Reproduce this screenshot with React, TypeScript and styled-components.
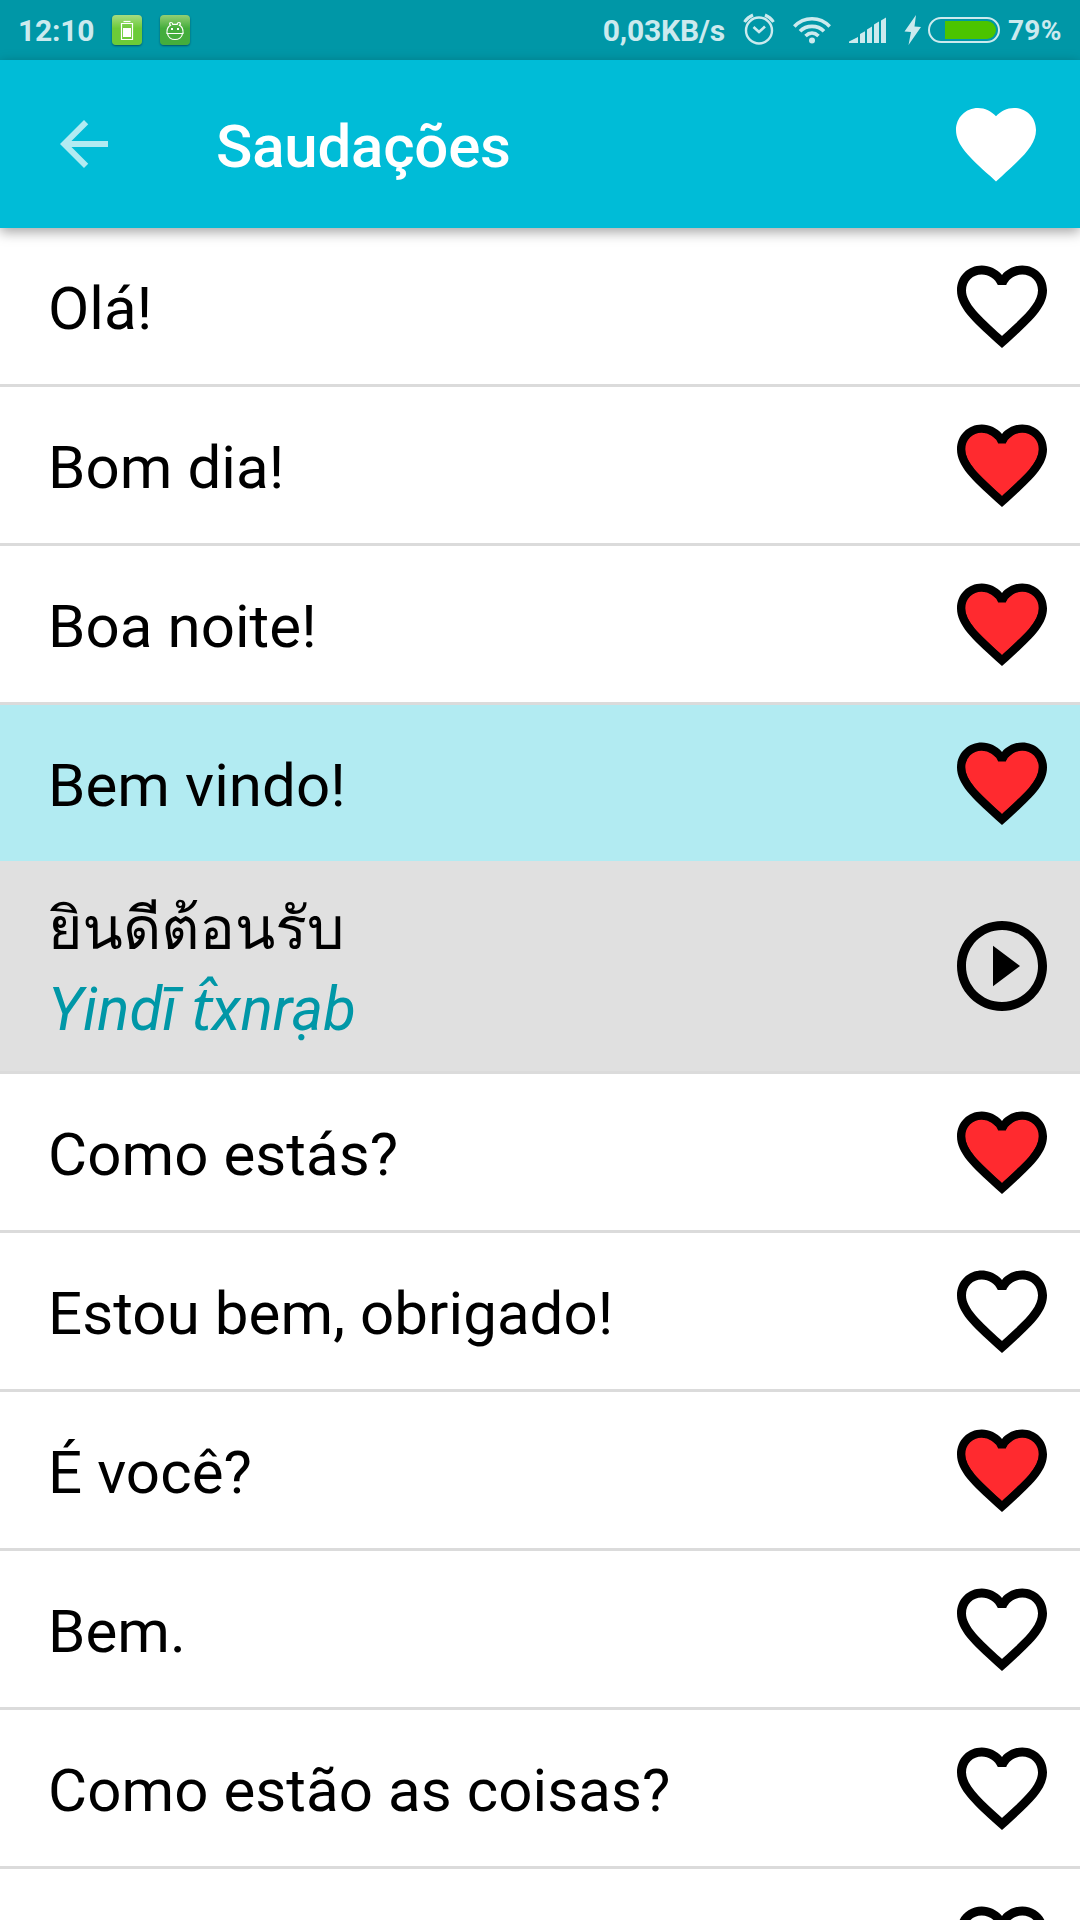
import React from "react";
import styled, { createGlobalStyle } from "styled-components";

const Global = createGlobalStyle`
  * { box-sizing: border-box; }
  html, body { margin: 0; padding: 0; background: #fff; }
  body { overflow: hidden; }
  svg { display: block; flex: none; }
`;

const Screen = styled.div`
  width: 1080px;
  height: 1920px;
  display: flex;
  flex-direction: column;
  overflow: hidden;
  background: #fff;
  font-family: Roboto, "Noto Sans", sans-serif;
  color: #000;
`;

const StatusBar = styled.div`
  flex: none;
  height: 60px;
  display: flex;
  align-items: center;
  padding: 0 18px;
  background: #0097a7;
  color: #cceaee;
`;

const StatusText = styled.span<{ $size?: number; $spacing?: number; $width?: number }>`
  display: block;
  flex: none;
  width: ${(p) => (p.$width ? `${p.$width}px` : "auto")};
  font-size: ${(p) => p.$size ?? 30}px;
  letter-spacing: ${(p) => p.$spacing ?? -0.2}px;
  line-height: 59px;
  font-weight: 700;
  white-space: nowrap;
  padding-top: 1px;
`;

const AppBadge = styled.span<{ $from: string; $to: string }>`
  display: flex;
  align-items: center;
  justify-content: center;
  width: 30px;
  height: 30px;
  margin-left: 18px;
  border-radius: 4px;
  background: linear-gradient(${(p) => p.$from}, ${(p) => p.$to} 45%);
  box-shadow: 0 1px 2px rgba(0, 40, 60, 0.6);
`;

const StatusRight = styled.div`
  margin-left: auto;
  display: flex;
  align-items: center;
`;

const StatusIcon = styled.span<{ $left: number }>`
  margin-left: ${(p) => p.$left}px;
`;

const Header = styled.header`
  flex: none;
  height: 168px;
  display: flex;
  align-items: center;
  padding: 0 36px 0 48px;
  background: #00bcd7;
  color: #fff;
  box-shadow: 0 4px 12px rgba(0, 0, 0, 0.36);
  position: relative;
  z-index: 1;
`;

const Title = styled.h1`
  flex: 1;
  margin: 0 0 0 96px;
  padding-top: 5px;
  font-size: 60px;
  line-height: 71px;
  font-weight: 500;
  letter-spacing: -0.2px;
`;

const List = styled.main`
  flex: 1;
  display: flex;
  flex-direction: column;
  min-height: 0;
`;

const Row = styled.div<{ $active?: boolean }>`
  flex: none;
  height: ${(p) => (p.$active ? 156 : 159)}px;
  display: flex;
  align-items: center;
  justify-content: space-between;
  padding: 0 24px 0 48px;
  background: ${(p) => (p.$active ? "#b2ebf2" : "#fff")};
  border-bottom: ${(p) => (p.$active ? "none" : "3px solid #dbdbdb")};
`;

const Phrase = styled.span`
  font-size: 60px;
  line-height: 71px;
  padding-top: 5px;
  letter-spacing: 0.08px;
  white-space: nowrap;
`;

const Translation = styled.div`
  flex: none;
  height: 213px;
  display: flex;
  align-items: center;
  justify-content: space-between;
  padding: 0 24px 0 48px;
  background: #e0e0e0;
  border-bottom: 3px solid #dbdbdb;
`;

const TranslationText = styled.div`
  display: flex;
  flex-direction: column;
  padding-top: 7px;
`;

const Thai = styled.span`
  font-family: Loma, "Noto Sans Thai Looped", sans-serif;
  font-size: 59px;
  line-height: 76px;
  margin-bottom: 4px;
`;

const Romanized = styled.span`
  font-size: 60px;
  line-height: 80px;
  font-style: italic;
  letter-spacing: 0.08px;
  color: #0097a7;
`;

function Heart({ liked }: { liked?: boolean }) {
  return (
    <svg width="108" height="108" viewBox="0 0 24 24">
      <path d="M16.5 3c-1.74 0-3.41.81-4.5 2.09C10.91 3.81 9.24 3 7.5 3 4.42 3 2 5.42 2 8.5c0 3.78 3.4 6.86 8.55 11.54L12 21.35l1.45-1.32C18.6 15.36 22 12.28 22 8.5 22 5.42 19.58 3 16.5 3zm-4.4 15.55l-.1.1-.1-.1C7.14 14.24 4 11.39 4 8.5 4 6.5 5.5 5 7.5 5c1.54 0 3.04.99 3.57 2.36h1.87C13.46 5.99 14.96 5 16.5 5c2 0 3.5 1.5 3.5 3.5 0 2.89-3.14 5.74-7.9 10.05z" />
      {liked && (
        <path
          fill="#ff2a2f"
          stroke="#ff2a2f"
          strokeWidth=".3"
          d="M12.1 18.55l-.1.1-.1-.1C7.14 14.24 4 11.39 4 8.5 4 6.5 5.5 5 7.5 5c1.54 0 3.04.99 3.57 2.36h1.87C13.46 5.99 14.96 5 16.5 5c2 0 3.5 1.5 3.5 3.5 0 2.89-3.14 5.74-7.9 10.05z"
        />
      )}
    </svg>
  );
}

type Item = { text: string; liked: boolean; active?: boolean };

const before: Item[] = [
  { text: "Olá!", liked: false },
  { text: "Bom dia!", liked: true },
  { text: "Boa noite!", liked: true },
  { text: "Bem vindo!", liked: true, active: true },
];

const after: Item[] = [
  { text: "Como estás?", liked: true },
  { text: "Estou bem, obrigado!", liked: false },
  { text: "É você?", liked: true },
  { text: "Bem.", liked: false },
  { text: "Como estão as coisas?", liked: false },
  { text: "", liked: false },
];

function PhraseRow({ item }: { item: Item }) {
  return (
    <Row $active={item.active}>
      <Phrase>{item.text}</Phrase>
      <Heart liked={item.liked} />
    </Row>
  );
}

export default function App() {
  return (
    <Screen>
      <Global />
      <StatusBar>
        <StatusText $width={76}>12:10</StatusText>
        <AppBadge $from="#a5dc82" $to="#6ccb38">
          <svg width="30" height="30" viewBox="0 0 30 30" fill="none" stroke="#fff">
            <path d="M9.5 8.5h11v16h-11z" strokeWidth="1.2" />
            <path d="M11.5 6.5h7" strokeWidth="1.2" />
            <path d="M11 13h8v9h-8z" fill="#fff" stroke="none" />
          </svg>
        </AppBadge>
        <AppBadge $from="#93cf74" $to="#44ad3c">
          <svg width="30" height="30" viewBox="0 0 30 30" fill="none" stroke="#fff" strokeWidth="1.2">
            <path d="M7 16.500C7 13.500 8.500 11.500 10.500 10.300C9 9 9.500 7.500 11 7.500C12.300 7.500 12.800 8.300 12.800 9.400H17.200C17.200 8.300 17.700 7.500 19 7.500C20.500 7.500 21 9 19.500 10.300C21.500 11.500 23 13.500 23 16.500" />
            <path d="M7 16.500V18.500H23V16.500M7.500 18.500C8.500 26.500 21.500 26.500 22.500 18.500" />
            <path d="M11 13h2v2h-2zM17 13h2v2h-2z" fill="#fff" stroke="none" />
          </svg>
        </AppBadge>
        <StatusRight>
          <StatusText>0,03KB/s</StatusText>
          <StatusIcon $left={18}>
            <svg width="32" height="34" viewBox="0 0 32 34" fill="none" stroke="#cceaee">
              <circle cx="16" cy="17.500" r="13" strokeWidth="2.400" />
              <path d="M10.500 14l5.500 5 6-5.500" strokeWidth="2.600" />
              <path d="M1.500 9C3.500 6 6.500 3.500 10 2M30.500 9C28.500 6 25.500 3.500 22 2" strokeWidth="3" />
            </svg>
          </StatusIcon>
          <StatusIcon $left={18}>
            <svg width="38" height="28" viewBox="0 0 38 28" fill="none" stroke="#cceaee" strokeWidth="3.600">
              <path d="M1.300 10.500C11 .1 27 .1 36.700 10.500M7 15.300c6.500-6.600 17.500-6.600 24 0M12.500 20c4-3.800 9-3.800 13 0" />
              <circle cx="19" cy="24.500" r="3" fill="#cceaee" stroke="none" />
            </svg>
          </StatusIcon>
          <StatusIcon $left={18}>
            <svg width="38" height="26" viewBox="0 0 38 26" fill="#cceaee">
              <path d="M0 26v-1.500L9 20v6zM11 26v-9l5-2.700V26zM18 26V12.500l5-3V26zM25 26V7.500l5-3V26zM32 26V3.500L37 .5V26z" />
            </svg>
          </StatusIcon>
          <StatusIcon $left={17}>
            <svg width="17" height="30" viewBox="0 0 17 30" fill="#cceaee">
              <path d="M12 0L.500 16.500l6.500.500L4.500 30 17 12l-6.500-.500z" />
            </svg>
          </StatusIcon>
          <StatusIcon $left={7}>
            <svg width="72" height="26" viewBox="0 0 72 26">
              <rect x="1" y="1" width="70" height="24" rx="12" fill="none" stroke="#cceaee" strokeWidth="2" />
              <path d="M17 4h42a9 9 0 0 1 0 18H17z" fill="#4bc400" />
            </svg>
          </StatusIcon>
          <StatusIcon $left={8}>
            <StatusText $size={28} $spacing={0.3} $width={54}>79%</StatusText>
          </StatusIcon>
        </StatusRight>
      </StatusBar>
      <Header>
        <svg width="72" height="72" viewBox="0 0 24 24" fill="#b2ebf2">
          <path d="M20 11H7.830l5.590-5.590L12 4l-8 8 8 8 1.410-1.410L7.830 13H20v-2z" />
        </svg>
        <Title>Saudações</Title>
        <svg width="96" height="96" viewBox="0 0 24 24" fill="#fff">
          <path d="M12 21.350l-1.450-1.320C5.400 15.360 2 12.280 2 8.500 2 5.420 4.420 3 7.500 3c1.740 0 3.410.81 4.500 2.090C13.090 3.810 14.760 3 16.500 3 19.580 3 22 5.420 22 8.500c0 3.780-3.400 6.860-8.550 11.540L12 21.350z" />
        </svg>
      </Header>
      <List>
        {before.map((item) => (
          <PhraseRow key={item.text} item={item} />
        ))}
        <Translation>
          <TranslationText>
            <Thai lang="th">ยินดีต้อนรับ</Thai>
            <Romanized>Yindī t̂xnrạb</Romanized>
          </TranslationText>
          <svg width="108" height="108" viewBox="0 0 24 24">
            <path d="M10 16.500l6-4.500-6-4.500v9zM12 2C6.480 2 2 6.480 2 12s4.480 10 10 10 10-4.480 10-10S17.520 2 12 2zm0 18c-4.410 0-8-3.590-8-8s3.590-8 8-8 8 3.590 8 8-3.590 8-8 8z" />
          </svg>
        </Translation>
        {after.map((item) => (
          <PhraseRow key={item.text} item={item} />
        ))}
      </List>
    </Screen>
  );
}
